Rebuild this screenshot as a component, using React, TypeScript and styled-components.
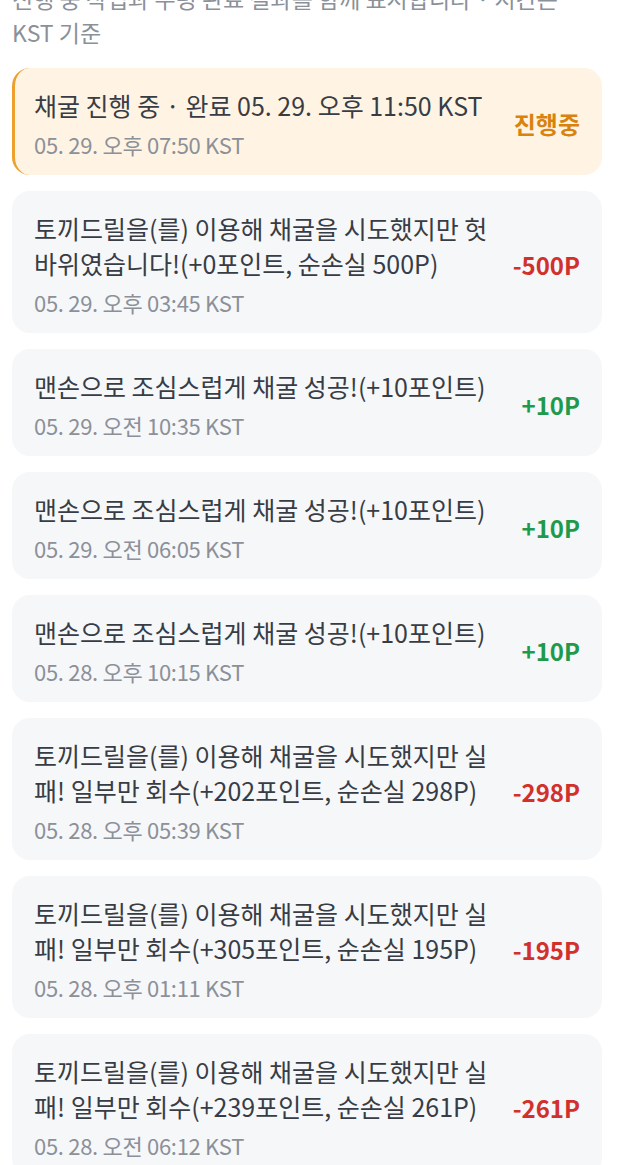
import React from 'react';
import styled, { createGlobalStyle } from 'styled-components';

const GlobalStyle = createGlobalStyle`
    html, body {
        margin: 0;
        padding: 0;
        background: #ffffff;
    }
    body {
        font-family: 'Noto Sans CJK KR', 'Noto Sans', sans-serif;
        -webkit-font-smoothing: antialiased;
    }
`;

const Page = styled.div`
    width: 590px;
    padding: 0 24px 0 12px;
    overflow: hidden;
`;

const Intro = styled.p`
    margin: -19px 0 19px;
    font-size: 23px;
    line-height: 34px;
    color: #8b9099;
`;

const List = styled.div`
    display: flex;
    flex-direction: column;
    gap: 16px;
`;

const Card = styled.div<{ $active?: boolean }>`
    display: flex;
    align-items: center;
    gap: 16px;
    padding: 20px 22px 16px ${(p) => (p.$active ? '19px' : '22px')};
    border-radius: 18px;
    background: ${(p) => (p.$active ? '#fff4e4' : '#f6f7f9')};
    border-left: ${(p) => (p.$active ? '3px solid #eda02d' : 'none')};
`;

const Body = styled.div`
    flex: 1;
    min-width: 0;
    display: flex;
    flex-direction: column;
    gap: 6px;
`;

const Title = styled.div`
    font-size: 25px;
    line-height: 35px;
    color: #383d45;
`;

const Time = styled.div`
    font-size: 22px;
    line-height: 30px;
    color: #8b9099;
    letter-spacing: -0.3px;
`;

type Tone = 'pending' | 'gain' | 'loss';

const toneColor: Record<Tone, string> = {
    pending: '#d9820e',
    gain: '#1f9a4c',
    loss: '#d2302c',
};

const Amount = styled.div<{ $tone: Tone }>`
    flex-shrink: 0;
    text-align: right;
    font-size: 24px;
    font-weight: 700;
    color: ${(p) => toneColor[p.$tone]};
`;

type Entry = {
    title: string;
    time: string;
    amount: string;
    tone: Tone;
};

const entries: Entry[] = [
    {
        title: '채굴 진행 중 · 완료 05. 29. 오후 11:50 KST',
        time: '05. 29. 오후 07:50 KST',
        amount: '진행중',
        tone: 'pending',
    },
    {
        title: '토끼드릴을(를) 이용해 채굴을 시도했지만 헛바위였습니다!(+0포인트, 순손실 500P)',
        time: '05. 29. 오후 03:45 KST',
        amount: '-500P',
        tone: 'loss',
    },
    {
        title: '맨손으로 조심스럽게 채굴 성공!(+10포인트)',
        time: '05. 29. 오전 10:35 KST',
        amount: '+10P',
        tone: 'gain',
    },
    {
        title: '맨손으로 조심스럽게 채굴 성공!(+10포인트)',
        time: '05. 29. 오전 06:05 KST',
        amount: '+10P',
        tone: 'gain',
    },
    {
        title: '맨손으로 조심스럽게 채굴 성공!(+10포인트)',
        time: '05. 28. 오후 10:15 KST',
        amount: '+10P',
        tone: 'gain',
    },
    {
        title: '토끼드릴을(를) 이용해 채굴을 시도했지만 실패! 일부만 회수(+202포인트, 순손실 298P)',
        time: '05. 28. 오후 05:39 KST',
        amount: '-298P',
        tone: 'loss',
    },
    {
        title: '토끼드릴을(를) 이용해 채굴을 시도했지만 실패! 일부만 회수(+305포인트, 순손실 195P)',
        time: '05. 28. 오후 01:11 KST',
        amount: '-195P',
        tone: 'loss',
    },
    {
        title: '토끼드릴을(를) 이용해 채굴을 시도했지만 실패! 일부만 회수(+239포인트, 순손실 261P)',
        time: '05. 28. 오전 06:12 KST',
        amount: '-261P',
        tone: 'loss',
    },
];

const App = (): JSX.Element => {
    return (
        <Page>
            <GlobalStyle />
            <Intro>진행 중 작업과 수령 완료 결과를 함께 표시합니다 · 시간은 KST 기준</Intro>
            <List>
                {entries.map((entry, i) => (
                    <Card key={i} $active={entry.tone === 'pending'}>
                        <Body>
                            <Title>{entry.title}</Title>
                            <Time>{entry.time}</Time>
                        </Body>
                        <Amount $tone={entry.tone}>{entry.amount}</Amount>
                    </Card>
                ))}
            </List>
        </Page>
    );
};

export default App;
